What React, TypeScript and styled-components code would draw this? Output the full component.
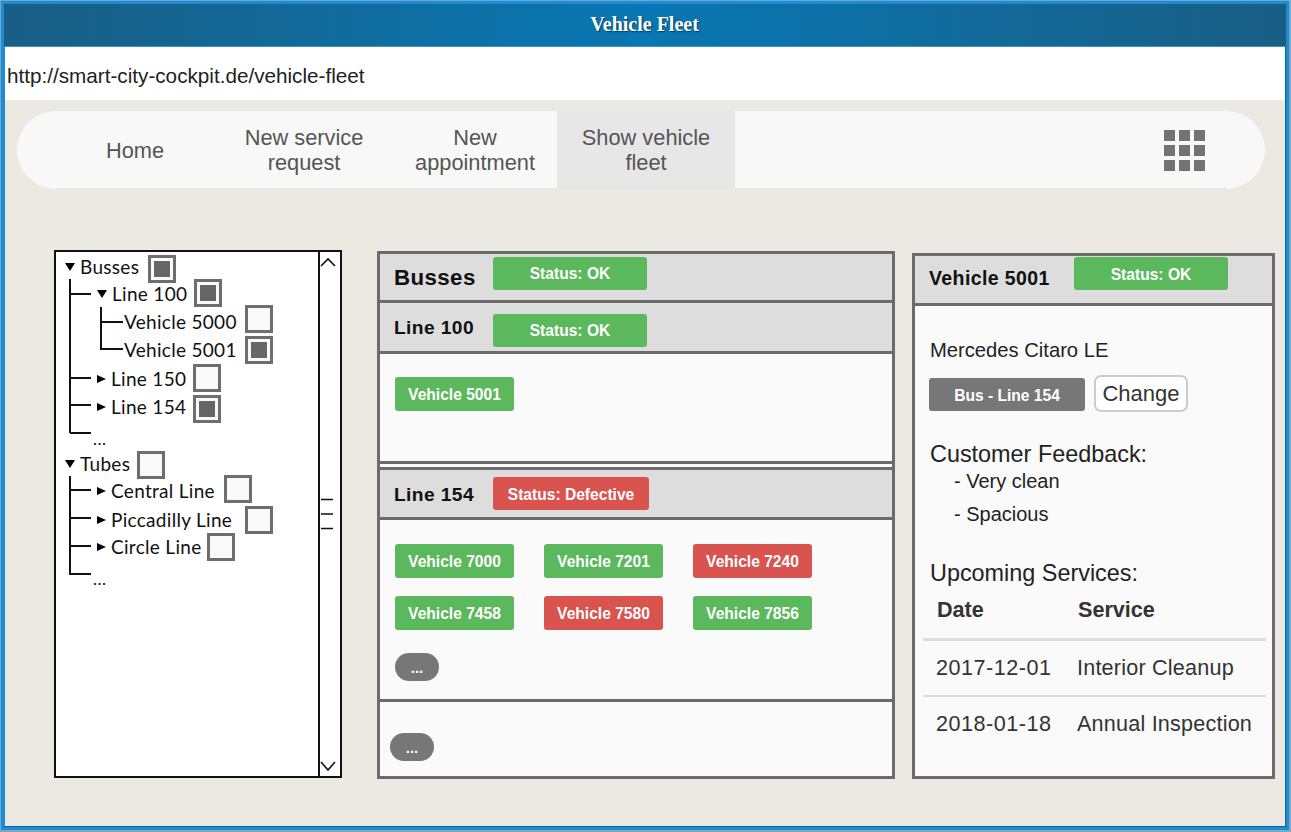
import React from "react";
import styled, { createGlobalStyle } from "styled-components";

const Global = createGlobalStyle`
  html, body { margin: 0; padding: 0; overflow: hidden; background: #ece9e2; }
  * { box-sizing: border-box; }
`;

const sans = `"Liberation Sans", Arial, sans-serif`;

const Frame = styled.div`
  width: 1291px; height: 832px;
  display: flex;
  border-style: solid; border-color: #7fa6bf;
  border-width: 1px 2px 2px 1px;
  font-family: ${sans};
`;
const Window = styled.div`
  flex: 1; min-width: 0;
  display: flex;
  border: 3px solid #1a8cd8;
`;
const Viewport = styled.div`
  flex: 1; min-width: 0;
  display: flex; flex-direction: column;
  background: #ece9e2;
  border-style: solid; border-color: #0f5f8f;
  border-width: 0 1px 1px 0;
`;
const TitleBar = styled.header`
  height: 43px; flex: none;
  display: flex; align-items: center; justify-content: center;
  padding-bottom: 2px;
  background: linear-gradient(90deg, #1a5e84 0%, #0877b3 50%, #1a5e84 100%);
  border-bottom: 1px solid #3f93c4;
  color: #fff;
  font: bold 20px "Liberation Serif", "Times New Roman", serif;
  text-shadow: 1px 1px 1px #0b3b57;
`;
const UrlBar = styled.div`
  height: 53px; flex: none;
  display: flex; align-items: center;
  padding: 5px 0 0 2px;
  background: #fff;
  border-left: 1px solid #1a8cd8;
  font-size: 20.7px; color: #222;
`;
const Main = styled.main`
  flex: 1;
  padding: 11px 0 0 12px;
  border-left: 1px solid #1a8cd8;
  display: flex; flex-direction: column;
`;
const Nav = styled.nav`
  position: relative;
  width: 1248px; height: 78px;
  display: flex; align-items: stretch;
  padding-left: 38px;
  border-radius: 39px;
  background: #f8f8f8;
  &::after {
    content: ""; position: absolute; left: 39px; right: 39px; bottom: -1px; height: 2px;
    background: #e7e7e7;
  }
`;
const NavItem = styled.a<{ $w: number; $active?: boolean }>`
  position: relative; z-index: 1;
  width: ${(p) => p.$w}px;
  display: flex; align-items: center; justify-content: center; text-align: center;
  font-size: 21.8px; line-height: 25px; color: #555;
  background: ${(p) => (p.$active ? "#e7e7e7" : "transparent")};
`;
const NavMenu = styled.svg`
  margin: auto 60px auto auto;
`;
const Content = styled.section`
  margin: 61px 0 0 37px;
  display: flex; align-items: flex-start;
`;
const TreePanel = styled.aside`
  position: relative;
  width: 288px; height: 528px; flex: none;
  display: flex;
  background: #fff;
  border: 2px solid #111;
`;
const TreeBody = styled.div`
  flex: 1;
  padding-top: 1px;
`;
const Lines = styled.svg`
  position: absolute; left: 0; top: 0; pointer-events: none;
`;
const Row = styled.div<{ $pad: number; $gap: number }>`
  height: 28px;
  margin-top: ${(p) => p.$gap}px;
  padding-left: ${(p) => p.$pad}px;
  display: flex; align-items: center;
`;
const Tri = styled.span<{ $dir: "down" | "right" }>`
  width: 0; height: 0; flex: none; margin-right: 5px;
  ${(p) =>
    p.$dir === "down"
      ? `border-left: 5px solid transparent; border-right: 5px solid transparent; border-top: 8px solid #000;`
      : `border-top: 4.5px solid transparent; border-bottom: 4.5px solid transparent; border-left: 9px solid #000;`}
`;
const TreeLabel = styled.span<{ $w: number }>`
  width: ${(p) => p.$w}px; flex: none;
  margin-bottom: 2px;
  font: 19px Lato, "Open Sans", sans-serif;
  letter-spacing: 0.3px;
  color: #111;
  white-space: nowrap;
`;
const Dots = styled.span`
  font: 17px Lato, sans-serif; color: #111; letter-spacing: 0.5px;
  padding-top: 3px;
`;
const Check = styled.span<{ $on?: boolean; $dy: number }>`
  width: 28px; height: 28px; flex: none;
  margin-top: ${(p) => p.$dy * 2}px;
  display: flex; align-items: center; justify-content: center;
  background: #f9f9f9;
  border: 3px solid #6e6e6e;
  &::after {
    content: ""; width: 16px; height: 16px;
    background: ${(p) => (p.$on ? "#666" : "transparent")};
  }
`;
const Scrollbar = styled.div`
  width: 22px; flex: none;
  display: flex; flex-direction: column; justify-content: space-between; align-items: flex-start;
  padding: 5px 0 4px;
  border-left: 2px solid #111;
`;
const Panel = styled.section<{ $w: number; $h: number; $top: number; $gap: number }>`
  width: ${(p) => p.$w}px; height: ${(p) => p.$h}px; flex: none;
  margin: ${(p) => p.$top}px 0 0 ${(p) => p.$gap}px;
  display: flex; flex-direction: column;
  background: #fafafa;
  border: 3px solid #6b6b6b;
`;
const Head = styled.div<{ $h: number; $pad: number; $rule?: boolean }>`
  height: ${(p) => p.$h}px; flex: none;
  display: flex; align-items: center;
  padding-left: ${(p) => p.$pad}px;
  background: #dddddd;
  border-bottom: 3px solid #6b6b6b;
  ${(p) => (p.$rule ? "border-top: 3px solid #6b6b6b;" : "")}
`;
const HeadTitle = styled.span<{ $size: number; $w: number; $y: number }>`
  width: ${(p) => p.$w}px; flex: none;
  font-size: ${(p) => p.$size}px; font-weight: bold; color: #111;
  letter-spacing: 0.4px;
  margin-top: ${(p) => p.$y}px;
`;
const Badge = styled.span<{ $w: number; $tone: "ok" | "bad" | "gray"; $y?: number }>`
  width: ${(p) => p.$w}px; height: 33px; flex: none;
  display: flex; align-items: center; justify-content: center;
  padding-top: 2px;
  margin-top: ${(p) => p.$y ?? 0}px;
  border-radius: 3px;
  font-size: 15.6px; font-weight: bold; color: #fff;
  background: ${(p) => (p.$tone === "ok" ? "#5cb85c" : p.$tone === "bad" ? "#d9534f" : "#777")};
`;
const Body = styled.div<{ $h: number; $line?: boolean }>`
  height: ${(p) => p.$h}px; flex: none;
  ${(p) => (p.$line ? "border-bottom: 3px solid #6b6b6b;" : "")}
`;
const SingleBody = styled(Body)`
  padding: 23px 0 0 15px;
`;
const Divider = styled.div`
  height: 3px; flex: none; background: #fafafa;
`;
const VehicleGrid = styled(Body)`
  padding: 24px 0 0 15px;
  display: grid;
  grid-template-columns: repeat(3, 149px);
  grid-auto-rows: 34px;
  row-gap: 18px;
  justify-items: start;
`;
const Vehicle = styled.span<{ $bad?: boolean }>`
  width: 119px; height: 34px;
  display: flex; align-items: center; justify-content: center;
  padding-top: 2px;
  border-radius: 3px;
  font-size: 15.6px; font-weight: bold; color: #fff;
  background: ${(p) => (p.$bad ? "#d9534f" : "#5cb85c")};
`;
const More = styled.span<{ $top?: number }>`
  width: 44px; height: 28px;
  margin-top: ${(p) => p.$top ?? 0}px;
  display: flex; align-items: center; justify-content: center;
  border-radius: 14px;
  background: #777; color: #fff;
  font-size: 15px; font-weight: bold;
`;
const LastBody = styled.div`
  flex: 1;
  padding: 31px 0 0 10px;
`;
const DetailBody = styled.div`
  flex: 1;
  padding: 32px 6px 0 14px;
`;
const Model = styled.div`
  font-size: 20.2px; line-height: 24px; color: #222; padding-left: 1px;
`;
const TagRow = styled.div`
  margin-top: 15px;
  display: flex; align-items: center; gap: 9px;
`;
const ChangeButton = styled.button`
  width: 94px; height: 37px; padding: 0;
  margin-top: -2px;
  background: #fff;
  border: 2px solid #ccc; border-radius: 7px;
  font: 22px ${sans}; color: #333;
`;
const Heading = styled.h3<{ $top: number }>`
  margin: ${(p) => p.$top}px 0 0;
  padding-left: 1px;
  font-size: 23.4px; line-height: 28px; font-weight: normal; color: #222;
`;
const Bullets = styled.ul`
  list-style: none; margin: -3px 0 0; padding: 0 0 0 25px;
`;
const Bullet = styled.li`
  font-size: 20px; line-height: 33px; color: #222;
`;
const Table = styled.table`
  width: 343px; margin: -2px 0 0 -6px;
  border-collapse: collapse;
  font-size: 21.6px; color: #333;
`;
const Th = styled.th<{ $w?: number }>`
  width: ${(p) => (p.$w ? `${p.$w}px` : "auto")};
  height: 54px;
  padding: 0 0 2px 14px;
  text-align: left; font-weight: bold;
  border-bottom: 3px solid #ddd;
`;
const Td = styled.td<{ $line?: boolean; $date?: boolean }>`
  height: ${(p) => (p.$line ? "57px" : "55px")};
  padding: ${(p) => (p.$line ? "1px" : "0")} 0 0 13px;
  white-space: nowrap;
  letter-spacing: ${(p) => (p.$date ? "0.5px" : "0.2px")};
  border-bottom: ${(p) => (p.$line ? "2px solid #ddd" : "0")};
`;

type Node = {
  label?: string; pad: number; gap: number; w?: number; tri?: "down" | "right";
  check?: boolean; dy?: number; dots?: boolean;
};
const tree: Node[] = [
  { label: "Busses", pad: 9, gap: 0, w: 68, tri: "down", check: true, dy: 2 },
  { label: "Line 100", pad: 41, gap: -1, w: 82, tri: "down", check: true, dy: -1.5 },
  { label: "Vehicle 5000", pad: 68, gap: 0, w: 121, check: false, dy: -3 },
  { label: "Vehicle 5001", pad: 68, gap: 0, w: 121, check: true, dy: 0 },
  { label: "Line 150", pad: 41, gap: 1, w: 82, tri: "right", check: false, dy: -1 },
  { label: "Line 154", pad: 41, gap: 0, w: 82, tri: "right", check: true, dy: 2 },
  { pad: 37, gap: 2, dots: true },
  { label: "Tubes", pad: 9, gap: -1, w: 57, tri: "down", check: false, dy: 1 },
  { label: "Central Line", pad: 41, gap: -1, w: 113, tri: "right", check: false, dy: -2 },
  { label: "Piccadilly Line", pad: 41, gap: 1, w: 134, tri: "right", check: false, dy: 0 },
  { label: "Circle Line", pad: 41, gap: -1, w: 96, tri: "right", check: false, dy: 0 },
  { pad: 37, gap: 2, dots: true },
];

const connectors = [
  "M14 27V181",
  "M14 42H35",
  "M14 126H35",
  "M14 153H35",
  "M14 181H35",
  "M45 55V97H67",
  "M45 70H67",
  "M14 224V322H35",
  "M14 238H35",
  "M14 266H35",
  "M14 294H35",
];

const grid = [0, 15, 30];

export default function App() {
  return (
    <Frame>
      <Global />
      <Window>
        <Viewport>
          <TitleBar>Vehicle Fleet</TitleBar>
          <UrlBar>http://smart-city-cockpit.de/vehicle-fleet</UrlBar>
          <Main>
            <Nav>
              <NavItem $w={160}>Home</NavItem>
              <NavItem $w={178}>New service<br />request</NavItem>
              <NavItem $w={164}>New<br />appointment</NavItem>
              <NavItem $w={178} $active>Show vehicle<br />fleet</NavItem>
              <NavMenu width="41" height="41" viewBox="0 0 41 41">
                {grid.map((y) =>
                  grid.map((x) => <rect key={`${x}-${y}`} x={x} y={y} width="11" height="11" fill="#737373" />)
                )}
              </NavMenu>
            </Nav>
            <Content>
              <TreePanel>
                <TreeBody>
                  {tree.map((n, i) => (
                    <Row key={i} $pad={n.pad} $gap={n.gap}>
                      {n.dots ? (
                        <Dots>...</Dots>
                      ) : (
                        <>
                          {n.tri && <Tri $dir={n.tri} />}
                          <TreeLabel $w={n.w ?? 0}>{n.label}</TreeLabel>
                          <Check $on={n.check} $dy={n.dy ?? 0} />
                        </>
                      )}
                    </Row>
                  ))}
                </TreeBody>
                <Lines width="263" height="340" viewBox="0 0 263 340" fill="none" stroke="#111" strokeWidth="2">
                  {connectors.map((d) => <path key={d} d={d} />)}
                </Lines>
                <Scrollbar>
                  <svg width="16" height="10" viewBox="0 0 16 10" fill="none" stroke="#111" strokeWidth="1.6">
                    <path d="M1 9L8 2l7 7" />
                  </svg>
                  <svg width="14" height="32" viewBox="0 0 14 32" fill="none" stroke="#111" strokeWidth="1.4">
                    <path d="M1 1.5h12M1 16h12M1 30.5h12" />
                  </svg>
                  <svg width="16" height="12" viewBox="0 0 16 12" fill="none" stroke="#111" strokeWidth="1.6">
                    <path d="M1 2l7 8 7-8" />
                  </svg>
                </Scrollbar>
              </TreePanel>

              <Panel $w={518} $h={528} $top={1} $gap={35}>
                <Head $h={49} $pad={14}>
                  <HeadTitle $size={22.3} $w={99} $y={2}>Busses</HeadTitle>
                  <Badge $w={154} $tone="ok" $y={-8}>Status: OK</Badge>
                </Head>
                <Head $h={51} $pad={14}>
                  <HeadTitle $size={19.2} $w={99} $y={2}>Line 100</HeadTitle>
                  <Badge $w={154} $tone="ok" $y={6}>Status: OK</Badge>
                </Head>
                <SingleBody $h={110} $line>
                  <Vehicle>Vehicle 5001</Vehicle>
                </SingleBody>
                <Divider />
                <Head $h={53} $pad={14} $rule>
                  <HeadTitle $size={19.2} $w={99} $y={2}>Line 154</HeadTitle>
                  <Badge $w={156} $tone="bad" $y={0}>Status: Defective</Badge>
                </Head>
                <VehicleGrid $h={182} $line>
                  <Vehicle>Vehicle 7000</Vehicle>
                  <Vehicle>Vehicle 7201</Vehicle>
                  <Vehicle $bad>Vehicle 7240</Vehicle>
                  <Vehicle>Vehicle 7458</Vehicle>
                  <Vehicle $bad>Vehicle 7580</Vehicle>
                  <Vehicle>Vehicle 7856</Vehicle>
                  <More $top={5}>...</More>
                </VehicleGrid>
                <LastBody>
                  <More>...</More>
                </LastBody>
              </Panel>

              <Panel $w={363} $h={526} $top={3} $gap={17}>
                <Head $h={50} $pad={14}>
                  <HeadTitle $size={19.5} $w={145} $y={-2}>Vehicle 5001</HeadTitle>
                  <Badge $w={154} $tone="ok" $y={-12}>Status: OK</Badge>
                </Head>
                <DetailBody>
                  <Model>Mercedes Citaro LE</Model>
                  <TagRow>
                    <Badge $w={156} $tone="gray">Bus - Line 154</Badge>
                    <ChangeButton>Change</ChangeButton>
                  </TagRow>
                  <Heading $top={28}>Customer Feedback:</Heading>
                  <Bullets>
                    <Bullet>- Very clean</Bullet>
                    <Bullet>- Spacious</Bullet>
                  </Bullets>
                  <Heading $top={28}>Upcoming Services:</Heading>
                  <Table>
                    <thead>
                      <tr><Th $w={141}>Date</Th><Th>Service</Th></tr>
                    </thead>
                    <tbody>
                      <tr><Td $line $date>2017-12-01</Td><Td $line>Interior Cleanup</Td></tr>
                      <tr><Td $date>2018-01-18</Td><Td>Annual Inspection</Td></tr>
                    </tbody>
                  </Table>
                </DetailBody>
              </Panel>
            </Content>
          </Main>
        </Viewport>
      </Window>
    </Frame>
  );
}
